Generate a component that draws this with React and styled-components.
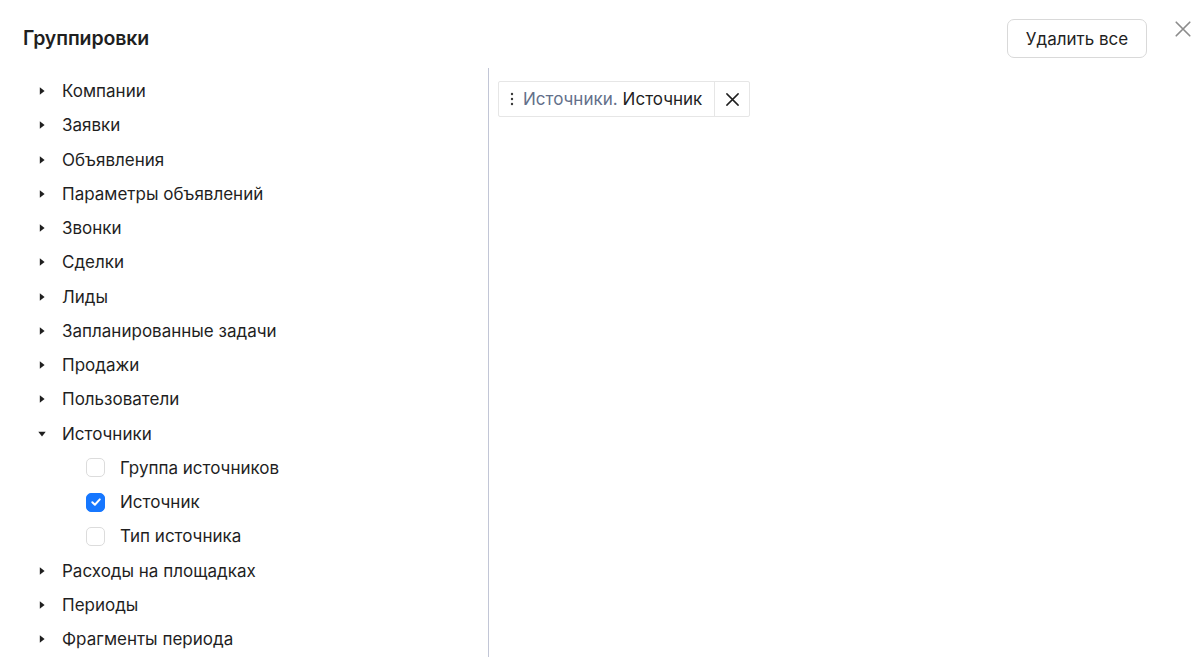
import React from "react";
import styled, { createGlobalStyle } from "styled-components";

const GlobalStyle = createGlobalStyle`
  html, body {
    margin: 0;
    padding: 0;
    background: #fff;
  }
  body {
    font-family: Inter, "Noto Sans", "Liberation Sans", sans-serif;
    color: #1f1f1f;
    -webkit-font-smoothing: antialiased;
  }
`;

const groups = [
  { title: "Компании" },
  { title: "Заявки" },
  { title: "Объявления" },
  { title: "Параметры объявлений" },
  { title: "Звонки" },
  { title: "Сделки" },
  { title: "Лиды" },
  { title: "Запланированные задачи" },
  { title: "Продажи" },
  { title: "Пользователи" },
  {
    title: "Источники",
    open: true,
    fields: [
      { title: "Группа источников", checked: false },
      { title: "Источник", checked: true },
      { title: "Тип источника", checked: false }
    ]
  },
  { title: "Расходы на площадках" },
  { title: "Периоды" },
  { title: "Фрагменты периода" }
];

const Caret = ({ open }) => (
  <CaretBox open={open}>
    <svg width="10" height="10" viewBox="0 0 10 10">
      <path d="M2.8 1.3 L7.6 5 L2.8 8.7 Z" fill="#1f1f1f" />
    </svg>
  </CaretBox>
);

const CheckIcon = () => (
  <svg width="12" height="12" viewBox="0 0 12 12">
    <path
      d="M2.3 6.2 L4.9 8.7 L9.8 3.4"
      fill="none"
      stroke="#fff"
      strokeWidth="2"
      strokeLinecap="round"
      strokeLinejoin="round"
    />
  </svg>
);

const CloseIcon = ({ size = 16, color = "#1f1f1f", width = 1.6 }) => (
  <svg width={size} height={size} viewBox="0 0 16 16">
    <path
      d="M2 2 L14 14 M14 2 L2 14"
      stroke={color}
      strokeWidth={width}
      strokeLinecap="round"
    />
  </svg>
);

const DragIcon = () => (
  <svg width="4" height="14" viewBox="0 0 4 14">
    <circle cx="2" cy="2" r="1.2" fill="#3a3a3a" />
    <circle cx="2" cy="7" r="1.2" fill="#3a3a3a" />
    <circle cx="2" cy="12" r="1.2" fill="#3a3a3a" />
  </svg>
);

const App = () => {
  return (
    <>
      <GlobalStyle />
      <Modal>
        <Header>
          <Title>Группировки</Title>
          <HeaderActions>
            <ClearButton>Удалить все</ClearButton>
            <CloseButton>
              <CloseIcon size={18} color="#8c8c8c" width={1.5} />
            </CloseButton>
          </HeaderActions>
        </Header>
        <Body>
          <Tree>
            {groups.map((g) => (
              <React.Fragment key={g.title}>
                <TreeRow>
                  <Caret open={g.open} />
                  <RowLabel>{g.title}</RowLabel>
                </TreeRow>
                {g.open &&
                  g.fields.map((f) => (
                    <FieldRow key={f.title}>
                      <Checkbox checked={f.checked}>
                        {f.checked && <CheckIcon />}
                      </Checkbox>
                      <RowLabel>{f.title}</RowLabel>
                    </FieldRow>
                  ))}
              </React.Fragment>
            ))}
          </Tree>
          <Selected>
            <Chip>
              <ChipLabel>
                <DragIcon />
                <ChipGroup>Источники.</ChipGroup>
                <ChipField>Источник</ChipField>
              </ChipLabel>
              <ChipRemove>
                <CloseIcon size={15} color="#1f1f1f" width={1.6} />
              </ChipRemove>
            </Chip>
          </Selected>
        </Body>
      </Modal>
    </>
  );
};

export default App;

const Modal = styled.div`
  display: flex;
  flex-direction: column;
  width: 1200px;
  height: 657px;
  overflow: hidden;
`;

const Header = styled.div`
  display: flex;
  align-items: center;
  justify-content: space-between;
  height: 38px;
  padding: 19px 8px 0 23px;
`;

const Title = styled.h2`
  margin: 0;
  font-size: 19.5px;
  font-weight: 600;
  color: #1f1f1f;
  letter-spacing: -0.1px;
`;

const HeaderActions = styled.div`
  display: flex;
  align-items: flex-start;
  gap: 27px;
  align-self: flex-start;
`;

const ClearButton = styled.button`
  height: 39px;
  width: 140px;
  padding: 0;
  border: 1px solid #d9d9d9;
  border-radius: 7px;
  background: #fff;
  font-family: inherit;
  font-size: 17px;
  color: #1f1f1f;
  cursor: pointer;
`;

const CloseButton = styled.div`
  display: flex;
  margin-top: 1px;
`;

const Body = styled.div`
  display: flex;
  flex: 1;
  margin-top: 11px;
`;

const Tree = styled.div`
  display: flex;
  flex-direction: column;
  width: 465px;
  padding: 6px 0 0 23px;
  border-right: 1px solid #c2c6d6;
`;

const TreeRow = styled.div`
  display: flex;
  align-items: center;
  height: 34.25px;
  flex-shrink: 0;
`;

const FieldRow = styled(TreeRow)`
  padding-left: 63px;
`;

const CaretBox = styled.span`
  display: inline-flex;
  width: 10px;
  height: 10px;
  margin: 0 15px 0 14px;
  transform: rotate(${({ open }) => (open ? "90deg" : "0deg")});
`;

const RowLabel = styled.span`
  font-size: 17px;
  color: #1f1f1f;
  white-space: nowrap;
`;

const Checkbox = styled.span`
  display: inline-flex;
  align-items: center;
  justify-content: center;
  box-sizing: border-box;
  width: 19px;
  height: 19px;
  margin-right: 15px;
  border-radius: 5px;
  border: 1px solid ${({ checked }) => (checked ? "#1677ff" : "#dcdcdc")};
  background: ${({ checked }) => (checked ? "#1677ff" : "#fff")};
`;

const Selected = styled.div`
  display: flex;
  align-items: flex-start;
  flex: 1;
  padding: 13px 0 0 9px;
`;

const Chip = styled.div`
  display: flex;
  height: 36px;
  box-sizing: border-box;
  border: 1px solid #e6e6e6;
  border-radius: 2px;
`;

const ChipLabel = styled.div`
  display: flex;
  align-items: center;
  gap: 9px;
  padding: 0 12px 0 11px;
  font-size: 17px;
  white-space: nowrap;
`;

const ChipGroup = styled.span`
  color: #63708a;
  margin-right: -4px;
`;

const ChipField = styled.span`
  color: #1f1f1f;
`;

const ChipRemove = styled.div`
  display: flex;
  align-items: center;
  justify-content: center;
  width: 34px;
  border-left: 1px solid #e6e6e6;
`;
